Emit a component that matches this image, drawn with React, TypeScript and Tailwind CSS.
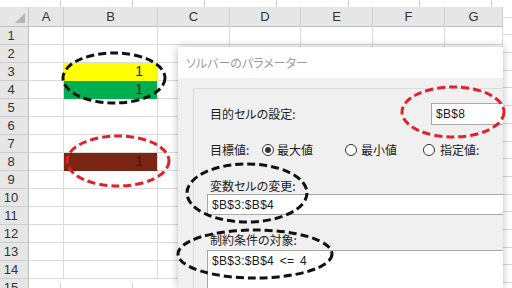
import React from 'react';

function TickStrip({ first }: { first: string }) {
  return (
    <div className="flex h-full">
      <div className={`${first} h-full border-r border-[#cfcfcf] shrink-0`} />
      <div className="w-[72px] h-full border-r border-[#cfcfcf] shrink-0" />
      <div className="w-[72px] h-full border-r border-[#cfcfcf] shrink-0" />
      <div className="w-[72px] h-full border-r border-[#cfcfcf] shrink-0" />
      <div className="w-[72px] h-full border-r border-[#cfcfcf] shrink-0" />
      <div className="w-[71px] h-full border-r border-[#cfcfcf] shrink-0" />
      <div className="w-[72px] h-full border-r border-[#cfcfcf] shrink-0" />
    </div>
  );
}

function Radio({ checked }: { checked?: boolean }) {
  return (
    <span className="w-[12px] h-[12px] rounded-full border border-[#333] bg-white flex items-center justify-center shrink-0">
      {checked && <span className="w-[6px] h-[6px] rounded-full bg-[#333]" />}
    </span>
  );
}

export default function App() {
  const letters = ['A', 'B', 'C', 'D', 'E', 'F', 'G'];
  const rows = Array.from({ length: 14 }, (_, i) => i + 1);
  const fill: Record<number, string> = {
    3: 'bg-[#ffff00] border-b-[#ffff00]',
    4: 'bg-[#00b050] border-b-[#00b050]',
    8: 'bg-[#7b2612] border-b-[#7b2612]',
  };
  const rightLines = Array.from({ length: 17 }, (_, i) => i);

  return (
    <div className="relative w-[512px] h-[288px] overflow-hidden bg-white flex font-['Liberation_Sans',sans-serif]">
      {/* sheet */}
      <div className="w-[503px] h-full flex flex-col shrink-0 overflow-hidden">
        <div className="h-[7px] shrink-0">
          <TickStrip first="w-[61px]" />
        </div>
        <div className="grid grid-cols-[29px_35px_94px_72px_71px_72px_72px_58px] h-[20px] shrink-0 bg-[#e6e6e6] border-b border-[#bdbdbd]">
          <div className="border-r border-[#c4c4c4] relative">
            <svg width="29" height="19" className="block">
              <polygon points="25,6 25,16 15,16" fill="#b5b5b5" />
            </svg>
          </div>
          {letters.map((l) => (
            <div key={l} className="border-r border-[#cdcdcd] flex items-center justify-center text-[13px] text-[#333]">
              {l}
            </div>
          ))}
        </div>
        {rows.map((r) => (
          <div key={r} className="grid grid-cols-[29px_35px_94px_72px_71px_72px_72px_58px] h-[18px] shrink-0">
            <div className="bg-[#e6e6e6] border-r border-[#bdbdbd] border-b border-b-[#cdcdcd] text-[13px] text-[#333] leading-[17px]">
              <div className="w-[22px] text-center">{r}</div>
            </div>
            <div className="border-r border-b border-[#dadada]" />
            <div
              className={`border-r border-b border-[#dadada] text-[14px] leading-[17px] text-right pr-[14px] text-[#222] ${fill[r] ?? ''}`}
            >
              {fill[r] ? '1' : ''}
            </div>
            <div className="border-r border-b border-[#dadada]" />
            <div className="border-r border-b border-[#dadada]" />
            <div className="border-r border-b border-[#dadada]" />
            <div className="border-r border-b border-[#dadada]" />
            <div className="border-r border-b border-[#dadada]" />
          </div>
        ))}
        <div className="flex h-[18px] shrink-0">
          <div className="w-[29px] bg-[#e6e6e6] border-r border-[#bdbdbd] text-[13px] text-[#333] leading-[17px] shrink-0">
            <div className="w-[22px] text-center">15</div>
          </div>
          <div className="flex-1 pt-[4px]">
            <TickStrip first="w-[32px]" />
          </div>
        </div>
      </div>

      {/* right strip */}
      <div className="w-[9px] h-full flex flex-col shrink-0">
        {rightLines.map((i) => (
          <div key={i} className="h-[17.7px] shrink-0 border-b border-[#d6d6d6]" />
        ))}
      </div>

      {/* dialog */}
      <div className="absolute left-[178px] top-[47px] w-[325px] bottom-0 bg-[#f0f0f0] shadow-[0_0_8px_rgba(0,0,0,0.28)] overflow-hidden flex flex-col font-['Noto_Sans_CJK_JP',sans-serif] [font-feature-settings:'palt'] text-[#1a1a1a]">
        <div className="h-[31px] bg-white shrink-0 flex items-center pl-[8px] text-[12px] text-[#9b9b9b]">
          ソルバーのパラメーター
        </div>
        <div className="flex-1 pt-[10px] pl-[15px] flex flex-col">
          <div className="flex-1 border-t border-l border-[#dcdcdc] pl-[13px] flex flex-col">
            <div className="mt-[14px] h-[22px] flex items-center shrink-0">
              <div className="w-[224px] pl-[3px] text-[12px] leading-[16px] shrink-0">目的セルの設定:</div>
              <div className="w-[100px] h-[22px] bg-white border border-[#a8a8a8] flex items-center pl-[4px] text-[12px] tracking-[0.3px] font-['Liberation_Sans',sans-serif] shrink-0">
                $B$8
              </div>
            </div>
            <div className="mt-[17px] h-[16px] flex items-center text-[12px] leading-[16px] shrink-0">
              <div className="w-[55px] pl-[3px] shrink-0">目標値:</div>
              <div className="w-[83px] flex items-center gap-[3px] shrink-0">
                <Radio checked />
                <span>最大値</span>
              </div>
              <div className="w-[78px] flex items-center gap-[4px] shrink-0">
                <Radio />
                <span>最小値</span>
              </div>
              <div className="flex items-center gap-[5px] shrink-0">
                <Radio />
                <span>指定値:</span>
              </div>
            </div>
            <div className="mt-[20px] h-[16px] pl-[3px] text-[12px] leading-[16px] shrink-0">変数セルの変更:</div>
            <div className="h-[21px] -mr-[20px] bg-white border border-[#a8a8a8] flex items-center pl-[4px] text-[12px] tracking-[0.3px] font-['Liberation_Sans',sans-serif] shrink-0">
              $B$3:$B$4
            </div>
            <div className="mt-[17px] h-[16px] pl-[3px] text-[12px] leading-[16px] shrink-0">制約条件の対象:</div>
            <div className="mt-[2px] flex-1 -mr-[20px] bg-white border-t border-l border-[#a8a8a8] pl-[4px] pt-[2px] text-[12px] leading-[16px] font-['Liberation_Sans',sans-serif] tracking-[0.3px] [word-spacing:2px]">
              $B$3:$B$4 &lt;= 4
            </div>
          </div>
        </div>
      </div>

      {/* annotation ellipses */}
      <svg className="absolute inset-0 pointer-events-none" width="512" height="288">
        <g fill="none" strokeWidth="3" strokeDasharray="8 4">
          <ellipse cx="114" cy="78" rx="51" ry="25" stroke="#111" />
          <ellipse cx="118" cy="161" rx="51" ry="25" stroke="#e3202a" />
          <ellipse cx="453" cy="112" rx="51" ry="25" stroke="#e3202a" />
          <ellipse cx="247" cy="193" rx="60" ry="29" stroke="#111" />
          <ellipse cx="255" cy="254" rx="77" ry="24" stroke="#111" />
        </g>
      </svg>
    </div>
  );
}
